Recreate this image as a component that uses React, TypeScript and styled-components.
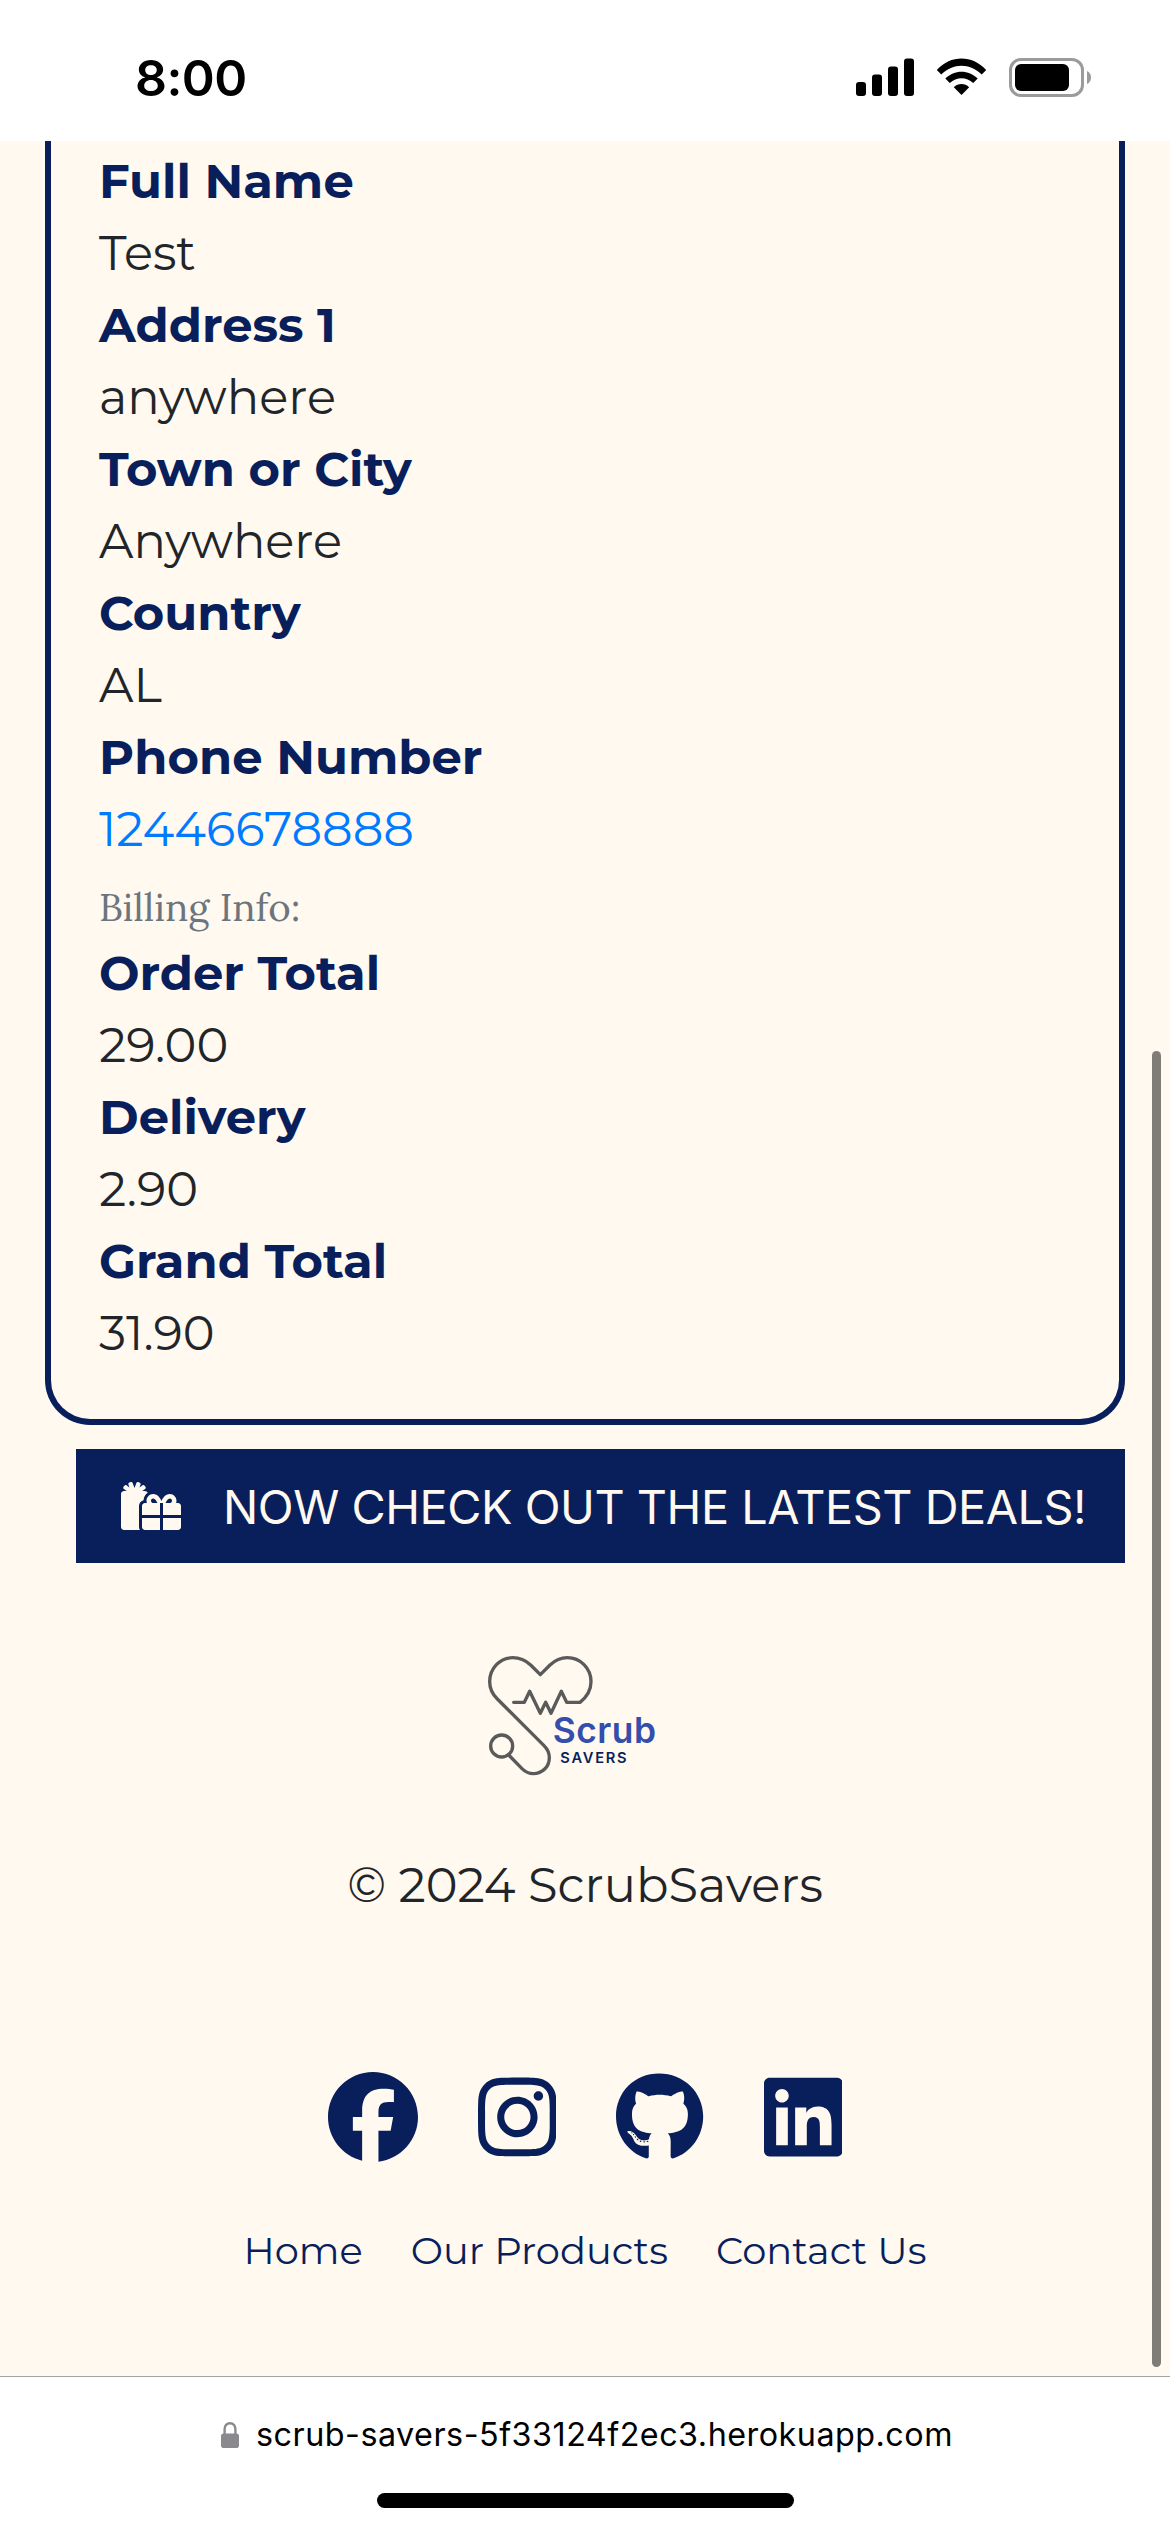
import React from 'react';
import styled, { createGlobalStyle } from 'styled-components';
import { FaGifts } from 'react-icons/fa';
import { FaFacebook, FaInstagram, FaGithub, FaLinkedin } from 'react-icons/fa6';

const navy = '#081F5C';
const cream = '#FFF9F0';
const ink = '#212529';

const GlobalStyle = createGlobalStyle`
  * { box-sizing: border-box; }
  body { margin: 0; background: #fff; font-family: Montserrat, Inter, sans-serif; }
`;

const Screen = styled.div`
  position: relative;
  display: flex;
  flex-direction: column;
  width: 1170px;
  height: 2532px;
  overflow: hidden;
  background: #fff;
`;

const StatusBar = styled.header`
  display: flex;
  justify-content: space-between;
  height: 141px;
  padding: 0 78px 0 135px;
  color: #000;
`;

const Clock = styled.time`
  margin-top: 48px;
  font: 600 50px/60px Inter, sans-serif;
  letter-spacing: -0.58px;
`;

const StatusIcons = styled.div`
  display: flex;
  align-items: center;
  gap: 22px;
  height: 40px;
  margin-top: 57px;
`;

const Page = styled.main`
  display: flex;
  flex-direction: column;
  height: 2235px;
  background: ${cream};
`;

const OrderCard = styled.section`
  height: 1284px;
  margin: 0 45px;
  padding: 4px 48px 0;
  border: 6px solid ${navy};
  border-top: 0;
  border-radius: 0 0 45px 45px;
`;

const Line = styled.div`
  height: 72px;
  font-size: 48px;
  line-height: 72px;
  white-space: nowrap;
`;

const Label = styled(Line)`
  color: ${navy};
  font-weight: 700;
`;

const Value = styled(Line)`
  color: ${ink};
  font-weight: 400;
`;

const PhoneLink = styled.a`
  color: #007bff;
  text-decoration: none;
`;

const SectionNote = styled(Line)`
  padding-top: 6px;
  color: #6c757d;
  font-family: Lora, 'Liberation Serif', serif;
  font-size: 38.4px;
`;

const DealsBanner = styled.a`
  display: flex;
  align-items: center;
  gap: 42px;
  height: 114px;
  margin: 24px 45px 0 76px;
  padding-left: 45px;
  background: ${navy};
  color: ${cream};
  font: 400 46.8px/72px Inter, sans-serif;
  letter-spacing: -0.45px;
  white-space: nowrap;
  text-decoration: none;

  span { padding-top: 1px; }
`;

const GiftIcon = styled(FaGifts)`
  width: 60px;
  height: 48px;
`;

const Footer = styled.footer`
  display: flex;
  flex-direction: column;
  align-items: center;
  padding-top: 67px;
`;

const Logo = styled.svg`
  width: 220px;
  height: 160px;
  margin-right: 30px;
`;

const Copyright = styled.p`
  margin: 59px 0 0;
  color: ${ink};
  font-weight: 400;
  font-size: 48px;
  line-height: 72px;
`;

const Socials = styled.div`
  display: flex;
  gap: 60px;
  margin-top: 151px;
  color: ${navy};
`;

const SocialLink = styled.a<{ $width: number }>`
  width: ${(p) => p.$width}px;
  color: inherit;

  svg { display: block; width: 100%; height: 90px; }
`;

const FooterNav = styled.nav`
  display: flex;
  gap: 48px;
  margin-top: 60px;
`;

const NavLink = styled.a`
  color: ${navy};
  font-size: 38.4px;
  line-height: 58px;
  white-space: nowrap;
  text-decoration: none;
`;

const BrowserBar = styled.div`
  display: flex;
  flex-direction: column;
  align-items: center;
  height: 156px;
  padding-top: 38px;
  border-top: 1px solid #a3a3a3;
  background: #fff;
`;

const Address = styled.div`
  display: flex;
  align-items: center;
  gap: 17px;
  height: 40px;
  padding-left: 4px;
  color: #000;
  font: 400 32.3px/40px Inter, sans-serif;
  letter-spacing: 0.5px;
`;

const HomeIndicator = styled.div`
  width: 417px;
  height: 15px;
  margin-top: 38px;
  border-radius: 8px;
  background: #000;
`;

const ScrollThumb = styled.div`
  position: absolute;
  top: 1051px;
  right: 9px;
  width: 9px;
  height: 1316px;
  border-radius: 5px;
  background: #807d78;
`;

function CellularIcon() {
  return (
    <svg width="58" height="38" viewBox="0 0 58 38">
      <rect x="0" y="24" width="10" height="14" rx="3" />
      <rect x="16" y="16.5" width="10" height="21.5" rx="3" />
      <rect x="32" y="8.5" width="10" height="29.5" rx="3" />
      <rect x="48" y="0.5" width="10" height="37.5" rx="3" />
    </svg>
  );
}

function WifiIcon() {
  return (
    <svg width="51" height="38" viewBox="0 0 51 38">
      <path d="M0.8 12 C15-3.3 36-3.3 50.2 12 L45.7 16.4 C34 4.8 17 4.8 5.3 16.4 Z" />
      <path d="M9.3 20.6 C18.3 11.4 32.7 11.4 41.7 20.6 L37.2 25 C30.5 18.6 20.5 18.6 13.8 25 Z" />
      <path d="M17.8 29.2 C22.2 25 28.8 25 33.2 29.2 L25.5 37 Z" />
    </svg>
  );
}

function BatteryIcon() {
  return (
    <svg width="83" height="39" viewBox="0 0 83 39">
      <rect x="1.5" y="1.5" width="72" height="36" rx="10.5" fill="none" stroke="#9b9b9b" strokeWidth="3" />
      <rect x="6" y="6" width="54" height="27" rx="6" />
      <path d="M78 13 C80.5 14 82 16.5 82 19.5 S80.5 25 78 26 Z" fill="#9b9b9b" />
    </svg>
  );
}

function LockIcon() {
  return (
    <svg width="18" height="26" viewBox="0 0 18 26">
      <rect x="0" y="11.5" width="18" height="14.5" rx="2.8" fill="#8a8a8e" />
      <path d="M3.6 13 V7.2 C3.6 3.6 5.8 1.3 9 1.3 S14.4 3.6 14.4 7.2 V13" fill="none" stroke="#8a8a8e" strokeWidth="2.4" />
    </svg>
  );
}

function ScrubSaversLogo() {
  return (
    <Logo viewBox="0 0 660 480">
      <g fill="none" stroke="#5a5a5a" strokeWidth="10" strokeLinecap="round" strokeLinejoin="round">
        <path d="M161 217 H193 L209 184 L241 250 L257 217 L273 250 L304 184 L320 217 H360 C381 200 393 178 393 155 C393 115 361 83 322 83 C302 83 285 91 270 105 L241 134 L212 105 C197 91 180 83 158 83 C120 83 89 115 89 155 C89 176 97 192 112 207 L252 347 C262 357 268 369 268 383 C268 410 247 431 220 431 C206 431 196 426 186 416 L149 378" />
        <circle cx="125" cy="348" r="33" />
      </g>
      <text x="278" y="338" fill="#334EAC" fontFamily="Inter, sans-serif" fontWeight="600" fontSize="106" textLength="310">Scrub</text>
      <text x="301" y="398" fill={navy} fontFamily="Inter, sans-serif" fontWeight="600" fontSize="44" textLength="199">SAVERS</text>
    </Logo>
  );
}

export default function App() {
  return (
    <>
      <GlobalStyle />
      <Screen>
        <StatusBar>
          <Clock>8:00</Clock>
          <StatusIcons>
            <CellularIcon />
            <WifiIcon />
            <BatteryIcon />
          </StatusIcons>
        </StatusBar>
        <Page>
          <OrderCard>
            <Label>Full Name</Label>
            <Value>Test</Value>
            <Label>Address 1</Label>
            <Value>anywhere</Value>
            <Label>Town or City</Label>
            <Value>Anywhere</Value>
            <Label>Country</Label>
            <Value>AL</Value>
            <Label>Phone Number</Label>
            <Value>
              <PhoneLink href="tel:12446678888">12446678888</PhoneLink>
            </Value>
            <SectionNote>Billing Info:</SectionNote>
            <Label>Order Total</Label>
            <Value>29.00</Value>
            <Label>Delivery</Label>
            <Value>2.90</Value>
            <Label>Grand Total</Label>
            <Value>31.90</Value>
          </OrderCard>
          <DealsBanner href="#deals">
            <GiftIcon />
            <span>NOW CHECK OUT THE LATEST DEALS!</span>
          </DealsBanner>
          <Footer>
            <ScrubSaversLogo />
            <Copyright>© 2024 ScrubSavers</Copyright>
            <Socials>
              <SocialLink href="#facebook" $width={90}><FaFacebook /></SocialLink>
              <SocialLink href="#instagram" $width={78.75}><FaInstagram /></SocialLink>
              <SocialLink href="#github" $width={87.2}><FaGithub /></SocialLink>
              <SocialLink href="#linkedin" $width={78.75}><FaLinkedin /></SocialLink>
            </Socials>
            <FooterNav>
              <NavLink href="#home">Home</NavLink>
              <NavLink href="#products">Our Products</NavLink>
              <NavLink href="#contact">Contact Us</NavLink>
            </FooterNav>
          </Footer>
        </Page>
        <BrowserBar>
          <Address>
            <LockIcon />
            <span>scrub-savers-5f33124f2ec3.herokuapp.com</span>
          </Address>
          <HomeIndicator />
        </BrowserBar>
        <ScrollThumb />
      </Screen>
    </>
  );
}
